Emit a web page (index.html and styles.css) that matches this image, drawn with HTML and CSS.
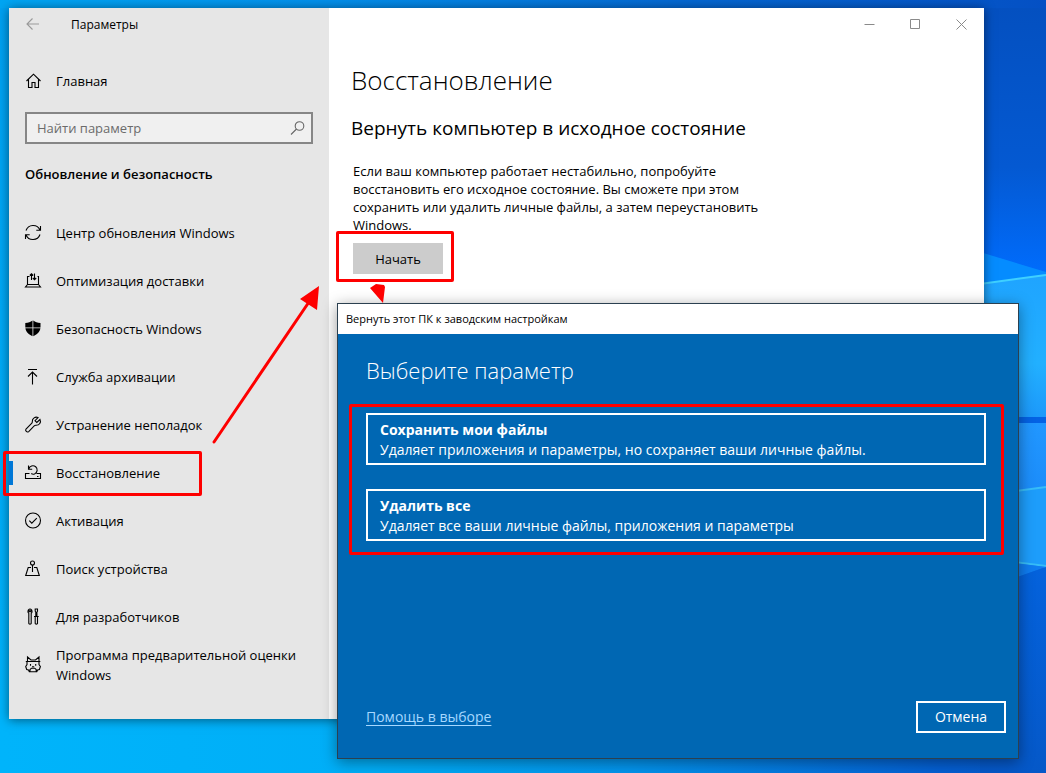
FILE: index.html
```html
<!DOCTYPE html>
<html lang="ru">
<head>
<meta charset="utf-8">
<title>Параметры</title>
<link rel="stylesheet" href="styles.css">
</head>
<body>
<div class="desktop">
  <svg class="wallpaper" viewBox="0 0 1046 773" preserveAspectRatio="none" aria-hidden="true">
    <defs>
      <linearGradient id="base" x1="0" y1="0" x2="1" y2="0">
        <stop offset="0" stop-color="#00a5f3"/>
        <stop offset=".3" stop-color="#0391ec"/>
        <stop offset=".65" stop-color="#0568d2"/>
        <stop offset="1" stop-color="#0450c4"/>
      </linearGradient>
      <linearGradient id="sky" x1="0" y1="0" x2="0" y2="1">
        <stop offset="0" stop-color="#0450c0"/>
        <stop offset=".6" stop-color="#0459d2"/>
        <stop offset="1" stop-color="#006cfc"/>
      </linearGradient>
      <linearGradient id="pane" x1="0" y1="0" x2="0" y2="1">
        <stop offset="0" stop-color="#1fa4ff"/>
        <stop offset=".6" stop-color="#22b0ff"/>
        <stop offset="1" stop-color="#1c96fa"/>
      </linearGradient>
      <linearGradient id="pane-low" x1="0" y1="0" x2="0" y2="1">
        <stop offset="0" stop-color="#2197ff"/>
        <stop offset="1" stop-color="#1580f4"/>
      </linearGradient>
      <linearGradient id="deep" x1="0" y1="0" x2="0" y2="1">
        <stop offset="0" stop-color="#0462dc"/>
        <stop offset="1" stop-color="#0558c8"/>
      </linearGradient>
      <linearGradient id="floor" x1="0" y1="0" x2="1" y2="0">
        <stop offset="0" stop-color="#00b4fb"/>
        <stop offset=".35" stop-color="#00aef7"/>
        <stop offset=".6" stop-color="#0394ec"/>
        <stop offset=".9" stop-color="#045fd2"/>
        <stop offset="1" stop-color="#0558c8"/>
      </linearGradient>
      <linearGradient id="left-edge" x1="0" y1="0" x2="0" y2="1">
        <stop offset="0" stop-color="#00a0f1"/>
        <stop offset="1" stop-color="#00b4fb"/>
      </linearGradient>
    </defs>
    <rect width="1046" height="773" fill="url(#base)"/>
    <rect y="8" width="60" height="765" fill="url(#left-edge)"/>
    <rect y="700" width="1046" height="73" fill="url(#floor)"/>
    <rect x="980" y="8" width="66" height="265" fill="url(#sky)"/>
    <path d="M980 252l66 20v6l-66 8z" fill="#058cff"/>
    <path d="M980 284l66-9v148h-66z" fill="url(#pane)"/>
    <path d="M980 284l66-9" stroke="#3fd0ff" stroke-width="2"/>
    <path d="M980 423h66v145l-66-4z" fill="url(#pane-low)"/>
    <path d="M980 420h66" stroke="#0462e4" stroke-width="6"/>
    <path d="M980 496l66-9v79l-66-6z" fill="#1d9dfb"/>
    <path d="M980 496l66-9M980 558l66 8" stroke="#37bdf8" stroke-width="2"/>
    <path d="M980 590l66-23v206h-66z" fill="url(#deep)"/>
    <path d="M980 559l66 8-66 23z" fill="#0f7cf0"/>
  </svg>

  <section class="window settings" aria-label="Параметры">
    <aside class="sidebar">
      <header class="sidebar-bar">
        <button class="back" type="button" aria-label="Назад">
          <svg class="glyph" viewBox="0 0 16 16"><path d="M14 7H2M7.500 1.500L2 7l5.500 5.500"/></svg>
        </button>
        <span>Параметры</span>
      </header>
      <a class="nav-link home" href="#home">
        <svg class="glyph" viewBox="0 0 16 16"><path d="M1.500 8L8.500 1.200 15.500 8M3.500 6.500v8H7v-5h3v5h3.500v-8"/></svg>
        <span>Главная</span>
      </a>
      <label class="search">
        <input type="text" placeholder="Найти параметр" aria-label="Найти параметр">
        <svg class="glyph" viewBox="0 0 16 16"><circle cx="10.500" cy="6" r="4.300"/><path d="M7.500 9L2 14.500"/></svg>
      </label>
      <h2 class="section-title">Обновление и безопасность</h2>
      <nav class="nav">
        <a class="nav-link" href="#update">
          <svg class="glyph" viewBox="0 0 16 16"><path d="M1 5.500A7.500 7.500 0 0 1 15 5M15 9.500A7.500 7.500 0 0 1 1 10M15.500 1v4.200h-4.200M.5 14V9.800h4.200"/></svg>
          <span>Центр обновления Windows</span>
        </a>
        <a class="nav-link" href="#delivery">
          <svg class="glyph" viewBox="0 0 16 16"><path d="M4.500 3.500h-2v8h11v-8h-1M2.500 11.500l-2 2.500h15l-2-2.500M6.500 7V.8M4.800 2.500L6.500.8l1.700 1.700M9.500.5v6M7.800 5l1.700 1.700L11.200 5"/></svg>
          <span>Оптимизация доставки</span>
        </a>
        <a class="nav-link" href="#security">
          <svg class="glyph" viewBox="0 0 16 16"><path class="solid" d="M7.500-.5v7H.3V2C3.500 2 5.500 1 7.500-.5zM8.300-.5c2 1.500 4 2.500 7.200 2.500v4.500H8.300zM.4 7.300h7.100v8C4 13.500.8 11 .4 7.300zM8.300 7.300h7.100c-.4 3.700-3.600 6.200-7.100 8z"/></svg>
          <span>Безопасность Windows</span>
        </a>
        <a class="nav-link" href="#backup">
          <svg class="glyph" viewBox="0 0 16 16"><path d="M3 .5h9M7.500 15.500V3M3 7.500L7.500 3 12 7.500"/></svg>
          <span>Служба архивации</span>
        </a>
        <a class="nav-link" href="#troubleshoot">
          <svg class="glyph" viewBox="0 0 16 16"><path d="M15 2.500l-3.200 3-1.800-1.800L13 .6C10.500-.7 7 1.200 7.300 4.700c0 .8 0 1-.7 1.700L1 12c-1.200 1.600 1 3.900 2.700 2.600l5.500-5.700c.7-.6 1-.7 1.800-.6 3.500.1 5.300-3.100 4-5.800z"/></svg>
          <span>Устранение неполадок</span>
        </a>
        <a class="nav-link current" href="#recovery" aria-current="page">
          <svg class="glyph" viewBox="0 0 16 16"><path d="M4.500 8.500h-4v5h15v-5h-4M3.500.5v3.700h3.700M3.700 4A4.300 4.300 0 1 1 9.500 9c-1.200.4-2.300.2-3.200-.5M12 11.500h1.500"/></svg>
          <span>Восстановление</span>
          <i class="mark"></i>
        </a>
        <a class="nav-link" href="#activation">
          <svg class="glyph" viewBox="0 0 16 16"><circle cx="8" cy="7.500" r="7.500"/><path d="M4.300 7.700l2.500 2.500 5-5"/></svg>
          <span>Активация</span>
        </a>
        <a class="nav-link" href="#find">
          <svg class="glyph" viewBox="0 0 16 16"><circle cx="7.500" cy="2" r="2"/><path d="M7.500 4v7M6 6.500H3.200L.7 14.500h13.600L11.800 6.500H9"/></svg>
          <span>Поиск устройства</span>
        </a>
        <a class="nav-link" href="#dev">
          <svg class="glyph" viewBox="0 0 16 16"><path d="M4.200.2v2.600h1.600V.2c1.600.9 1.600 3.300.4 4.200v10.100c0 .8-2.400.8-2.400 0V4.400C2.600 3.500 2.600 1.100 4.200.2zM10.200 0h2.300v2.200l-.6 1v4.300h-1.100V3.200l-.6-1zM9 7.500h4.700M10.200 7.500v7c0 .8 2.300.8 2.300 0v-7"/></svg>
          <span>Для разработчиков</span>
        </a>
        <a class="nav-link" href="#insider">
          <svg class="glyph" viewBox="0 0 16 16"><path d="M2.500 4V0L6 3h4.500L14 0v4M.8 4.500h14.500M2 4.500v3L.7 9.500l1 3 1.800.5.800 1.700h7.500l.8-1.700 1.800-.5 1-3L14 7.500v-3M5.500 7v1.700M10.700 7v1.700M7 9.700h2.200M5 14.500v-2l1.500-1.300h3.200l1.500 1.300v2"/></svg>
          <span>Программа предварительной оценки Windows</span>
        </a>
      </nav>
    </aside>

    <main class="content">
      <div class="caption">
        <button type="button" aria-label="Свернуть"><svg viewBox="0 0 11 11"><path d="M.5 5.500h10"/></svg></button>
        <button type="button" aria-label="Развернуть"><svg viewBox="0 0 11 11"><path d="M.5.5h9v9h-9z"/></svg></button>
        <button type="button" aria-label="Закрыть"><svg viewBox="0 0 11 11"><path d="M.5.5l10 10M10.500.5l-10 10"/></svg></button>
      </div>
      <h1 class="title">Восстановление</h1>
      <h2 class="subtitle">Вернуть компьютер в исходное состояние</h2>
      <p class="text">Если ваш компьютер работает нестабильно, попробуйте<br>восстановить его исходное состояние. Вы сможете при этом<br>сохранить или удалить личные файлы, а затем переустановить<br>Windows.</p>
      <div class="start-wrap">
        <button class="start" type="button">Начать</button>
        <i class="mark"></i>
      </div>
    </main>
  </section>

  <section class="window dialog" role="dialog" aria-label="Вернуть этот ПК к заводским настройкам">
    <header class="dialog-bar">Вернуть этот ПК к заводским настройкам</header>
    <div class="dialog-body">
      <h2 class="dialog-title">Выберите параметр</h2>
      <div class="options">
        <button class="option" type="button"><strong>Сохранить мои файлы</strong><span>Удаляет приложения и параметры, но сохраняет ваши личные файлы.</span></button>
        <button class="option" type="button"><strong>Удалить все</strong><span>Удаляет все ваши личные файлы, приложения и параметры</span></button>
        <i class="mark"></i>
      </div>
      <footer class="dialog-foot">
        <a class="help" href="#help">Помощь в выборе</a>
        <button class="cancel" type="button">Отмена</button>
      </footer>
    </div>
  </section>

  <svg class="arrows" viewBox="0 0 400 460" aria-hidden="true">
    <path d="M214 442L311 299" stroke="#fe0000" stroke-width="3" stroke-linecap="round"/>
    <path d="M319 286l-19 13 17 11zM370 288l6-4 8 1 1 2-2 16z" fill="#fe0000"/>
  </svg>
</div>
</body>
</html>
```

FILE: styles.css
```css
* {
  box-sizing: border-box;
}

body {
  margin: 0;
  font-family: "Open Sans", "Noto Sans", sans-serif;
  font-size: 13px;
  line-height: 20px;
  color: #000;
}

h1,
h2,
p {
  margin: 0;
  font-weight: 400;
}

button {
  margin: 0;
  padding: 0;
  border: 0;
  background: none;
  font: inherit;
  color: inherit;
}

.desktop {
  position: relative;
  min-height: 100vh;
  overflow: hidden;
}

.wallpaper {
  position: absolute;
  inset: 0;
  width: 100%;
  height: 100%;
}

.window {
  position: absolute;
  display: flex;
}

.settings {
  inset: 8px 62px 54px 9px;
  background: #fff;
  box-shadow: 0 1px 10px rgba(0, 0, 0, 0.5);
}

.sidebar {
  flex: 0 0 320px;
  padding: 0 16px;
  background: #e6e6e6;
}

.sidebar-bar {
  display: flex;
  align-items: center;
  gap: 30px;
  height: 33px;
  font-size: 12px;
}

.back {
  display: flex;
  color: #999;
}

.glyph {
  flex: none;
  width: 16px;
  height: 16px;
  overflow: visible;
  fill: none;
  stroke: currentColor;
  stroke-width: 1.1;
}

.glyph .solid {
  fill: currentColor;
  stroke: none;
}

.nav-link {
  position: relative;
  display: flex;
  align-items: center;
  gap: 15px;
  min-height: 48px;
  color: #000;
  text-decoration: none;
}

.home {
  margin-top: 16px;
}

.search {
  display: flex;
  align-items: center;
  height: 32px;
  margin-top: 7px;
  padding: 0 6px 0 10px;
  border: 2px solid #868686;
  background: #f0f0f0;
  color: #666;
}

.search input {
  flex: 1;
  min-width: 0;
  padding: 0;
  border: 0;
  outline: 0;
  background: none;
  font: inherit;
}

.search input::placeholder {
  color: #6b6b6b;
  opacity: 1;
}

.section-title {
  margin: 20px 0 25px;
  font-size: 13px;
  font-weight: 600;
}

.current::before {
  content: "";
  position: absolute;
  top: 12px;
  left: -16px;
  width: 4px;
  height: 24px;
  background: #0078d7;
}

.mark {
  position: absolute;
  border: 3px solid #fe0000;
  border-radius: 2px;
  pointer-events: none;
}

.current .mark {
  inset: 2px 111px 1px -22px;
}

.content {
  flex: 1;
  min-width: 0;
  padding: 0 0 0 22px;
}

.caption {
  display: flex;
  justify-content: flex-end;
  height: 32px;
}

.caption button {
  display: grid;
  place-items: center;
  width: 46px;
}

.caption svg {
  width: 11px;
  height: 11px;
  fill: none;
  stroke: #8a8a8a;
}

.title {
  margin-top: 20px;
  font-size: 26px;
  font-weight: 300;
  line-height: 40px;
}

.subtitle {
  margin-top: 14px;
  font-size: 19px;
  line-height: 28px;
}

.text {
  margin: 20px 0 0 2px;
  line-height: 18px;
}

.start-wrap {
  position: relative;
  width: max-content;
  margin: 9px 0 0 2px;
}

.start {
  width: 90px;
  height: 31px;
  background: #ccc;
}

.start-wrap .mark {
  inset: -12px -11px -8px -17px;
}

.dialog {
  inset: 303px 27px 14px 337px;
  flex-direction: column;
  border: 1px solid #2b4050;
  background: #0067b3;
  box-shadow: 0 3px 14px rgba(0, 0, 0, 0.4);
}

.dialog-bar {
  padding: 5px 8px;
  background: #fff;
  font-size: 11px;
}

.dialog-body {
  display: flex;
  flex: 1;
  flex-direction: column;
  padding: 19px 12px 25px 28px;
  color: #fff;
}

.dialog-title {
  font-size: 22px;
  font-weight: 300;
  line-height: 34px;
}

.options {
  position: relative;
  display: grid;
  gap: 24px;
  margin: 26px 20px 0 0;
}

.option {
  display: flex;
  flex-direction: column;
  padding: 5px 12px 3px;
  border: 2px solid #fff;
  font-size: 14px;
  line-height: 20px;
  text-align: left;
}

.options .mark {
  inset: -9px -18px -14px -17px;
}

.dialog-foot {
  display: flex;
  align-items: center;
  justify-content: space-between;
  margin-top: auto;
  font-size: 14px;
}

.help {
  color: #a6d8ff;
  text-underline-offset: 3px;
}

.cancel {
  width: 90px;
  height: 32px;
  border: 2px solid #fff;
}

.arrows {
  position: absolute;
  top: 0;
  left: 0;
  width: 400px;
  height: 460px;
  fill: none;
  pointer-events: none;
}
```
